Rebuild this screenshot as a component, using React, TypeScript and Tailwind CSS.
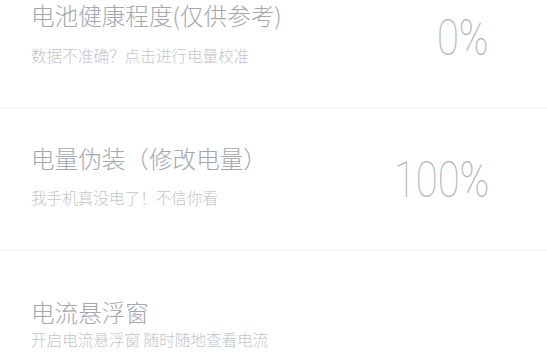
import React from "react";

const cjk = { fontFamily: '"Noto Sans CJK SC", "Noto Sans", sans-serif' };

function Row({
  title,
  sub,
  value,
  titleTop,
  gap,
}: {
  title: string;
  sub: string;
  value?: string;
  titleTop: string;
  gap: string;
}) {
  return (
    <div className="flex h-[142px] items-center justify-between border-b border-[#f3f4f5] pl-[31px] pr-[58px]">
      <div className={`flex h-full flex-col ${titleTop} ${gap}`}>
        <div className="text-[23.6px] font-light leading-[30px] text-[#a3a8af]" style={cjk}>
          {title}
        </div>
        <div className="text-[15.6px] font-light leading-[20px] text-[#c2c5ca]" style={cjk}>
          {sub}
        </div>
      </div>
      {value && (
        <div
          className="origin-right scale-x-[0.8] text-[50px] font-thin leading-none text-[#afb3ba]"
          style={{ fontFamily: 'Roboto, "Liberation Sans", sans-serif' }}
        >
          {value}
        </div>
      )}
    </div>
  );
}

export default function App() {
  return (
    <div className="h-[357px] w-[547px] overflow-hidden bg-white">
      <div className="-mt-[33px]">
        <Row title="电池健康程度(仅供参考)" sub="数据不准确？点击进行电量校准" value="0%" titleTop="pt-[33px]" gap="gap-[15px]" />
        <Row title="电量伪装（修改电量）" sub="我手机真没电了！不信你看" value="100%" titleTop="pt-[34px]" gap="gap-[14px]" />
        <div className="flex h-[142px] flex-col gap-[2px] pl-[31px] pt-[46px]">
          <div className="text-[23.6px] font-light leading-[30px] text-[#a3a8af]" style={cjk}>
            电流悬浮窗
          </div>
          <div className="text-[15.6px] font-light leading-[20px] text-[#c2c5ca]" style={cjk}>
            开启电流悬浮窗 随时随地查看电流
          </div>
        </div>
      </div>
    </div>
  );
}
